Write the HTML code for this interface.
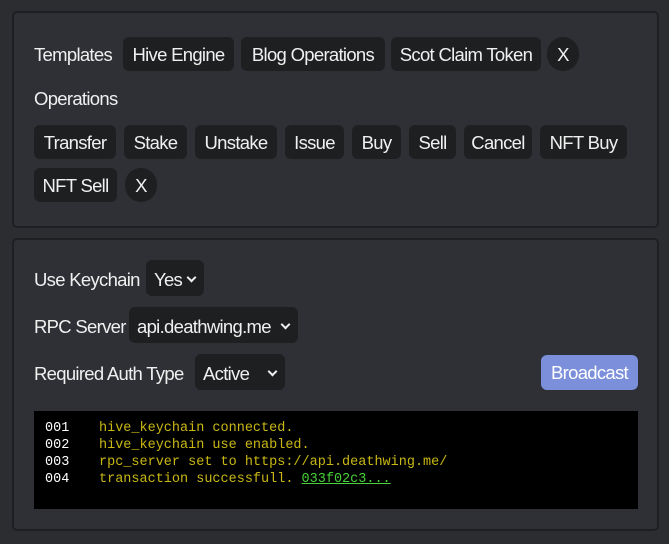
<!DOCTYPE html>
<html><head><meta charset="utf-8"><style>
*{margin:0;padding:0;box-sizing:border-box}
body{width:669px;height:544px;background:#2b2d31;position:relative;overflow:hidden;font-family:"Liberation Sans",sans-serif;color:#f0f0f0}
.p{position:absolute;left:12px;width:647px;background:#2e3035;border:2px solid #1e1f22;border-radius:5px}
.b,.l,.s{position:absolute;font-size:18.5px;letter-spacing:-0.7px;white-space:nowrap}
.b{background:#1e1f21;border-radius:6px;height:34px;line-height:35px;text-align:center}
.c{border-radius:17px}
.l{line-height:24px}
.s{background:#1e1f21;border-radius:6px;height:36px;line-height:39px;padding-left:8px}
.s:after{content:"";position:absolute;right:9px;top:14px;width:5px;height:5px;border-right:2px solid #eee;border-bottom:2px solid #eee;transform:rotate(45deg)}
.con{position:absolute;left:34px;top:411px;width:604px;height:98px;background:#000;font-family:"Liberation Mono",monospace;font-size:13.5px;line-height:17px;padding-top:9px}
.con div{position:relative;height:17px;color:#c9b814}
.con span.n{position:absolute;left:11px;color:#fff}
.con span.t{position:absolute;left:65px}
a{color:#48d23a;text-decoration:underline}
</style></head><body>
<div class="p" style="top:11px;height:217px"></div>
<div class="p" style="top:238px;height:293px"></div>
<div class="l" style="left:34px;top:43px">Templates</div>
<div class="b" style="left:123px;top:37px;width:111px">Hive Engine</div>
<div class="b" style="left:241px;top:37px;width:144px">Blog Operations</div>
<div class="b" style="left:391px;top:37px;width:150px">Scot Claim Token</div>
<div class="b c" style="left:547px;top:37px;width:32px">X</div>
<div class="l" style="left:34px;top:87px">Operations</div>
<div class="b" style="left:34px;top:125px;width:82px">Transfer</div>
<div class="b" style="left:124px;top:125px;width:63px">Stake</div>
<div class="b" style="left:195px;top:125px;width:82px">Unstake</div>
<div class="b" style="left:285px;top:125px;width:59px">Issue</div>
<div class="b" style="left:352px;top:125px;width:49px">Buy</div>
<div class="b" style="left:409px;top:125px;width:47px">Sell</div>
<div class="b" style="left:464px;top:125px;width:68px">Cancel</div>
<div class="b" style="left:540px;top:125px;width:87px">NFT Buy</div>
<div class="b" style="left:34px;top:168px;width:83px">NFT Sell</div>
<div class="b c" style="left:125px;top:168px;width:32px">X</div>
<div class="l" style="left:34px;top:268px">Use Keychain</div>
<div class="s" style="left:146px;top:260px;width:58px">Yes</div>
<div class="l" style="left:34px;top:315px">RPC Server</div>
<div class="s" style="left:129px;top:307px;width:169px">api.deathwing.me</div>
<div class="l" style="left:34px;top:362px">Required Auth Type</div>
<div class="s" style="left:195px;top:354px;width:90px">Active</div>
<div class="b" style="left:541px;top:355px;width:97px;height:35px;line-height:36px;background:#7b8fdb;color:#fff">Broadcast</div>
<div class="con">
<div><span class="n">001</span><span class="t">hive_keychain connected.</span></div>
<div><span class="n">002</span><span class="t">hive_keychain use enabled.</span></div>
<div><span class="n">003</span><span class="t">rpc_server set to https://api.deathwing.me/</span></div>
<div><span class="n">004</span><span class="t">transaction successfull. <a>033f02c3...</a></span></div>
</div>
</body></html>
